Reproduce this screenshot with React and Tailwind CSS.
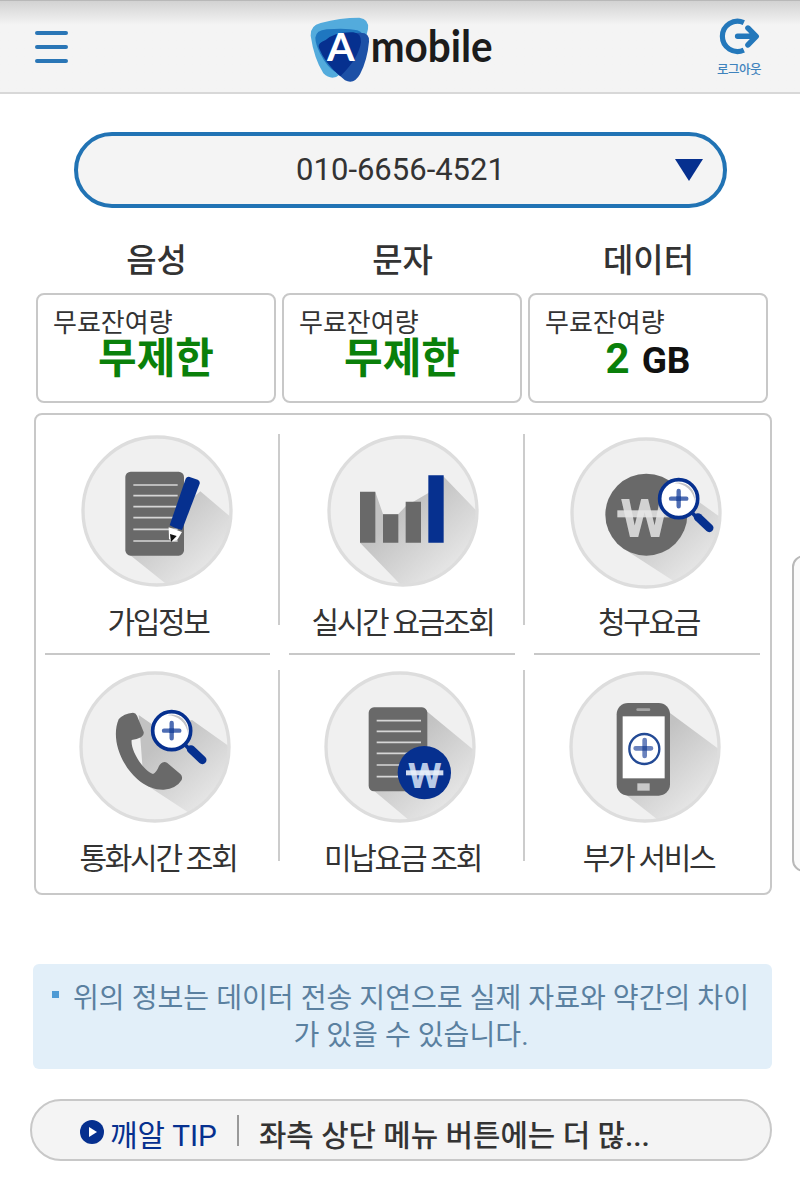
import React from "react";

const usage = [
  { title: "음성", value: "무제한" },
  { title: "문자", value: "무제한" },
  { title: "데이터", value: "2", unit: "GB" },
];

const Logo = () => (
  <svg width="200" height="90" viewBox="0 0 600 270" className="overflow-visible">
    <path
      d="M32 92Q30 62 62 54Q120 38 178 38Q208 42 204 72Q200 95 190 115L122 207Q96 230 70 205Q42 160 32 92Z"
      fill="#53abdc"
    />
    <path
      d="M46 98Q48 76 80 73Q140 68 172 76Q195 82 186 110L105 200Q82 188 60 145Q46 115 46 98Z"
      fill="#1f77c0"
    />
    <path
      d="M170 84Q210 78 207 110Q202 165 180 208Q162 240 135 226Q78 180 58 132Q52 112 82 104Q120 86 170 84Z"
      fill="#1c50a6"
    />
    <path
      d="M56 126Q54 114 76 106Q104 80 160 82Q184 84 183 112Q176 160 121 214Q75 175 56 126Z"
      fill="#06308f"
    />
    <text
      x="81"
      y="168"
      textLength="83"
      lengthAdjust="spacingAndGlyphs"
      className="font-['Lato',sans-serif] text-[112px] font-bold"
      fill="#fff"
    >
      A
    </text>
    <text
      x="212"
      y="172"
      textLength="366"
      lengthAdjust="spacingAndGlyphs"
      className="font-['Lato',sans-serif] text-[130px] font-bold"
      fill="#1c1c1c"
    >
      mobile
    </text>
  </svg>
);

const Magnifier = ({ cx, cy }) => (
  <g transform={`translate(${cx} ${cy})`}>
    <path d="M40 42L54 56" stroke="#06308f" strokeWidth="11" />
    <path d="M58 56L92 88" stroke="#06308f" strokeWidth="25" strokeLinecap="round" />
    <circle r="57" fill="#fff" stroke="#06308f" strokeWidth="11" />
    <path d="M-14 -46A48 48 0 0 1 48 8A60 60 0 0 0 -14 -46Z" fill="#c4c4c8" />
    <path d="M-23 0H23M0 -23V23" stroke="#4e6db3" strokeWidth="13" strokeLinecap="round" />
    <rect x="-7" y="-7" width="14" height="14" fill="#234a9f" />
  </g>
);

const Paper = ({ x, y }) => (
  <g transform={`translate(${x} ${y})`}>
    <rect width="176" height="252" rx="16" fill="#696969" />
    <path
      d="M24 40H157M24 72H157M24 105H157M24 138H157M24 173H157M24 208H157"
      stroke="#d6d6d6"
      strokeWidth="5"
    />
  </g>
);

// round grey badge behind every menu icon, the long shadow is clipped to it
const Badge = ({ id, cx, cy, shadow, className, children }) => (
  <svg
    width="152"
    height="152"
    viewBox={`${cx - 228} ${cy - 228} 456 456`}
    className={className}
  >
    <defs>
      <clipPath id={`${id}-clip`}>
        <circle cx={cx} cy={cy} r="220" />
      </clipPath>
      <linearGradient
        id={`${id}-shade`}
        gradientUnits="userSpaceOnUse"
        x1={cx}
        y1={cy}
        x2={cx + 150}
        y2={cy + 170}
      >
        <stop offset="0" stopColor="#c2c2c2" />
        <stop offset="1" stopColor="#e6e6e6" />
      </linearGradient>
    </defs>
    <circle cx={cx} cy={cy} r="222" fill="#f0f0f0" />
    <path d={shadow} fill={`url(#${id}-shade)`} clipPath={`url(#${id}-clip)`} />
    <circle cx={cx} cy={cy} r="222" fill="none" stroke="#dddddd" strokeWidth="10" />
    {children}
  </svg>
);

const JoinInfoIcon = () => (
  <Badge id="join" cx={260} cy={259} shadow="M175 388L390 200L520 310V520H340Z">
    <Paper x={165} y={141} />
    <path d="M295 308L335 322L320 347L305 350L296 343Z" fill="#fff" />
    <path d="M299 328L319 334L302 352Z" fill="#111" />
    <path
      d="M346 162Q350 155 358 157L382 165Q390 169 388 177L335 316Q316 313 298 302Z"
      fill="#06308f"
    />
  </Badge>
);

const RealtimeIcon = () => (
  <Badge
    id="realtime"
    cx={264}
    cy={259}
    shadow="M135 354L181 202L204 268H250L272 245L340 205L385 155L520 295V520H295Z"
    className="ml-[2px]"
  >
    <path d="M135 201H181V354H135ZM204 269H250V354H204ZM272 231H318V354H272Z" fill="#696969" />
    <path d="M340 152H386V354H340Z" fill="#06308f" />
  </Badge>
);

const BillIcon = () => (
  <Badge
    id="bill"
    cx={260}
    cy={266}
    shadow="M200 378L415 230L520 305V520H420Z"
    className="mt-[2px] -ml-[3px]"
  >
    <circle cx="261" cy="271" r="123" fill="#696969" />
    <text
      x="183"
      y="337"
      textLength="146"
      lengthAdjust="spacingAndGlyphs"
      className="font-['Roboto',sans-serif] text-[162px] font-bold"
      fill="#d2d2d2"
    >
      W
    </text>
    <rect x="174" y="258" width="156" height="21" fill="#e8e8e8" fillOpacity="0.85" />
    <Magnifier cx={358} cy={223} />
  </Badge>
);

const CallTimeIcon = () => (
  <Badge
    id="call"
    cx={254}
    cy={261}
    shadow="M205 165L262 205L365 180L520 290V520H450L220 370Z"
    className="-ml-1"
  >
    <path
      d="M145 178Q160 160 188 158Q196 158 200 167L220 216Q222 226 212 232Q196 240 184 240C180 270 216 330 248 342Q258 338 266 318Q276 302 290 308L330 342Q338 350 334 360Q318 386 280 389C190 392 110 260 145 178Z"
      fill="#696969"
    />
    <Magnifier cx={304} cy={212} />
  </Badge>
);

const UnpaidIcon = () => (
  <Badge
    id="unpaid"
    cx={256}
    cy={261}
    shadow="M175 390L338 155L520 305V520H330Z"
    className="-ml-[3px]"
  >
    <Paper x={162} y={142} />
    <circle cx="329" cy="338" r="80" fill="#06308f" />
    <text
      x="279"
      y="384"
      textLength="102"
      lengthAdjust="spacingAndGlyphs"
      className="font-['Roboto',sans-serif] text-[106px] font-bold"
      fill="#b9cae8"
    >
      W
    </text>
    <rect x="274" y="331" width="112" height="15" fill="#e9effa" fillOpacity="0.9" />
  </Badge>
);

const ExtraServiceIcon = () => (
  <Badge
    id="extra"
    cx={255}
    cy={261}
    shadow="M190 398L325 155L520 300V520H345Z"
    className="-ml-[6px]"
  >
    <rect x="170" y="129" width="160" height="278" rx="34" fill="#696969" />
    <rect x="229" y="145" width="42" height="8" rx="4" fill="#a4a4a4" />
    <rect x="188" y="169" width="126" height="186" fill="#fff" />
    <rect x="232" y="370" width="37" height="22" fill="#c9c9c9" />
    <circle cx="253" cy="267" r="45" fill="none" stroke="#234a95" strokeWidth="7" />
    <path d="M227 265H273M254 240V288" stroke="#6a82bd" strokeWidth="14" strokeLinecap="round" />
    <rect x="247" y="258" width="14" height="14" fill="#2f519e" />
  </Badge>
);

const menu = [
  { label: "가입정보", Icon: JoinInfoIcon },
  { label: "실시간 요금조회", Icon: RealtimeIcon },
  { label: "청구요금", Icon: BillIcon },
  { label: "통화시간 조회", Icon: CallTimeIcon },
  { label: "미납요금 조회", Icon: UnpaidIcon },
  { label: "부가 서비스", Icon: ExtraServiceIcon },
];

const Header = () => (
  <header className="flex h-[94px] items-start justify-between border-t border-b-2 border-t-[#b8b8b8] border-b-[#d8d8d8] bg-[#f4f4f4] bg-linear-to-b from-[#d2d2d2] to-[#f4f4f4] to-[24px]">
    <button className="mt-[30px] ml-[35px] flex w-[100px] flex-col gap-[10px]">
      <span className="h-1 w-[33px] rounded-xs bg-[#2a76b6]" />
      <span className="h-1 w-[33px] rounded-xs bg-[#2a76b6]" />
      <span className="h-1 w-[33px] rounded-xs bg-[#2a76b6]" />
    </button>
    <div className="mt-1 ml-[84px] w-[200px]">
      <Logo />
    </div>
    <button className="mt-[17px] ml-[98px] flex w-[122px] flex-col items-center">
      <svg width="42" height="37" viewBox="57 40 122 107">
        <path
          d="M132 53A44 44 0 1 0 132 133"
          fill="none"
          stroke="#2478bb"
          strokeWidth="15"
        />
        <path
          d="M114 93H164M144 69L168 93L144 118"
          fill="none"
          stroke="#2478bb"
          strokeWidth="16"
          strokeLinecap="round"
          strokeLinejoin="round"
        />
      </svg>
      <span className="mt-[7px] text-[12.5px] leading-4 font-medium tracking-[-0.5px] text-[#3f83bd]">
        로그아웃
      </span>
    </button>
  </header>
);

const App = () => {
  return (
    <div className="relative h-[1177px] w-[800px] overflow-hidden bg-white font-['Roboto','Noto_Sans_CJK_KR',sans-serif] text-[#333]">
      <Header />

      <button className="mt-[38px] ml-[74px] flex h-[76px] w-[653px] items-center rounded-full border-4 border-[#2173b4] bg-[#f4f4f4] pr-5 pl-[48px]">
        <span className="flex-1 pt-px text-center text-[31px]">010-6656-4521</span>
        <svg width="28" height="22" viewBox="0 0 28 22">
          <path d="M0 0H28L14 22Z" fill="#06308f" />
        </svg>
      </button>

      <section className="mt-[32px] ml-[36px] grid w-[732px] grid-cols-3 gap-x-[6px]">
        {usage.map((item) => (
          <div key={item.title}>
            <h2 className="h-[53px] pl-px text-center text-[33px] leading-[42px] font-medium">
              {item.title}
            </h2>
            <div className="h-[110px] rounded-lg border-2 border-[#c8c8c8] pt-[9px]">
              <p className="pl-[15px] text-[26px] leading-[38px]">무료잔여량</p>
              <p className="flex items-baseline justify-center gap-3 text-[42px] leading-[34px] font-bold text-[#0a800a]">
                {item.value}
                {item.unit && <span className="text-[37px] text-[#111]">{item.unit}</span>}
              </p>
            </div>
          </div>
        ))}
      </section>

      <section className="mt-[10px] ml-[34px] grid h-[482px] w-[738px] grid-cols-[244px_245px_245px] grid-rows-[240px_238px] rounded-lg border-2 border-[#c8c8c8]">
        {menu.map(({ label, Icon }, i) => (
          <div key={label} className="flex flex-col">
            <div className={i < 3 ? "flex pt-[19px]" : "flex pt-[15px]"}>
              <div className="flex h-[220px] flex-1 flex-col items-center pt-px">
                <Icon />
                <span className="mt-auto pb-[9px] pl-[2px] text-[30px] leading-[44px] tracking-[-2.3px] whitespace-pre">
                  {label}
                </span>
              </div>
              {i % 3 < 2 && <div className="h-[191px] w-[2px] bg-[#cccccc]" />}
            </div>
            {i < 3 && <div className="-mt-px mr-[10px] ml-[9px] h-[2px] bg-[#c8c8c8]" />}
          </div>
        ))}
      </section>

      <section className="mt-[69px] ml-[33px] flex h-[105px] w-[739px] rounded-md bg-[#e2eff9] pt-[16px] text-[#5a80a0]">
        <span className="mt-[11px] ml-[19px] size-[7px] bg-[#4f9bd5]" />
        <p className="ml-[13px] w-[678px] text-center text-[28.1px] leading-[37px] whitespace-nowrap">
          위의 정보는 데이터 전송 지연으로 실제 자료와 약간의 차이
          <br />가 있을 수 있습니다.
        </p>
      </section>

      <section className="mt-[30px] ml-[30px] flex h-[62px] w-[742px] items-center rounded-full border-2 border-[#c8c8c8] bg-[#f4f4f4] pt-[12px] pl-12 whitespace-nowrap">
        <svg width="24" height="24" viewBox="0 0 24 24" className="-mt-[9px]">
          <circle cx="12" cy="12" r="12" fill="#06308f" />
          <path d="M9 7L17 12L9 17Z" fill="#fff" />
        </svg>
        <span className="ml-[6px] text-[29.8px] leading-[44px] text-[#06308f]">깨알 TIP</span>
        <span className="-mt-[12px] ml-5 h-[31px] w-[2px] bg-[#999]" />
        <span className="ml-5 text-[29.8px] leading-[44px] font-medium">
          좌측 상단 메뉴 버튼에는 더 많...
        </span>
      </section>

      {/* edge of the next slide */}
      <div className="absolute top-[555px] left-[792px] h-[317px] w-10 rounded-xl border-2 border-[#b8b8b8] bg-[#fafafa]" />
    </div>
  );
};

export default App;
